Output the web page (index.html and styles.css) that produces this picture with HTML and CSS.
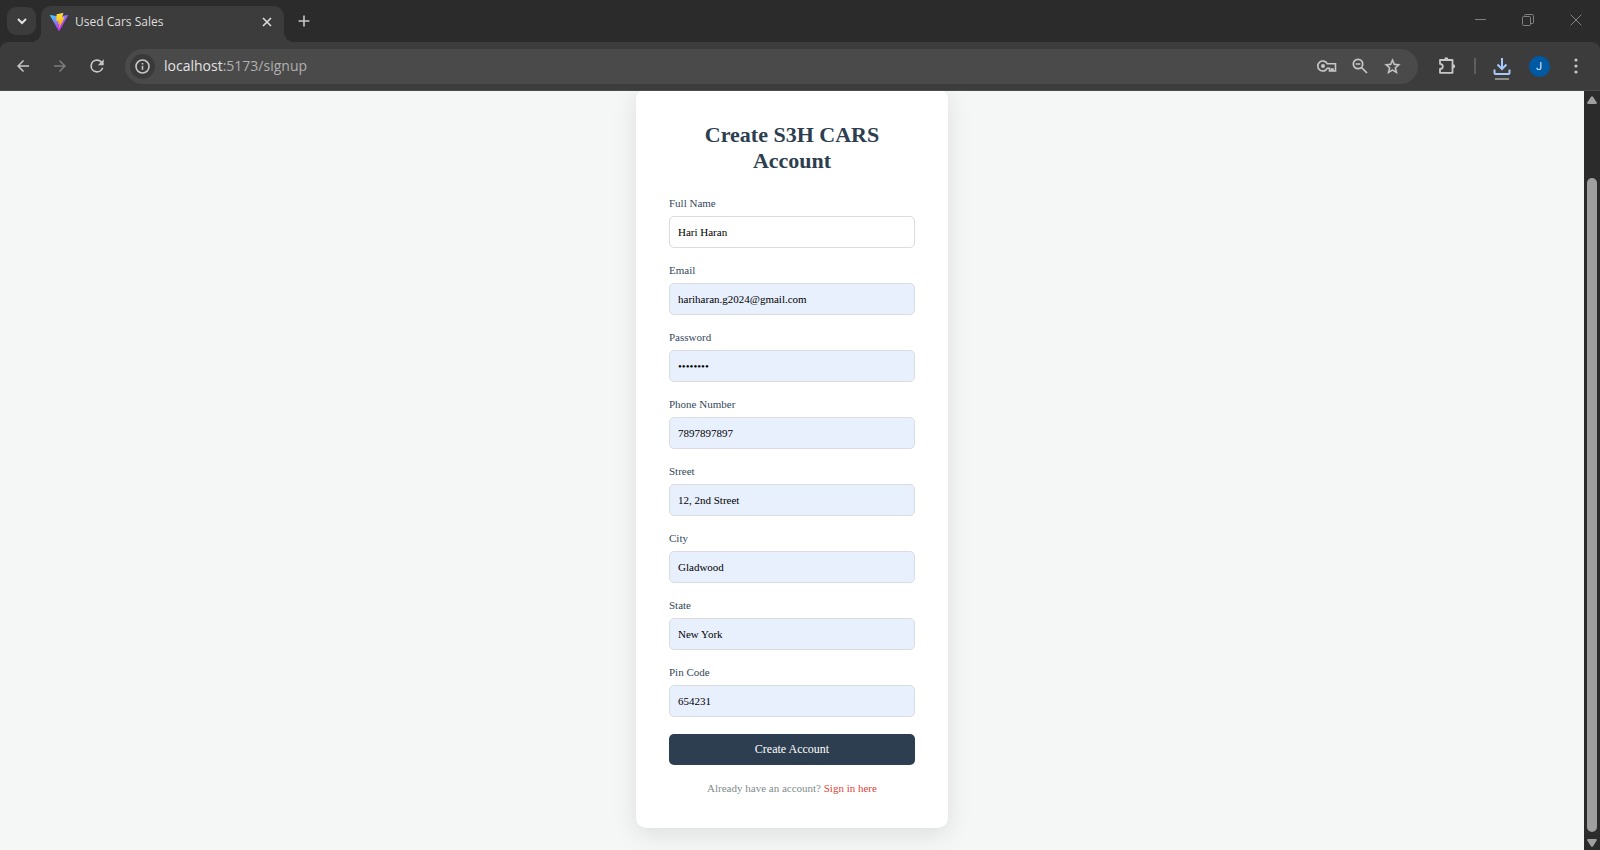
FILE: index.html
```
<!DOCTYPE html>
<html lang="en">
<head>
<meta charset="utf-8">
<meta name="viewport" content="width=device-width, initial-scale=1">
<title>Used Cars Sales</title>
<link rel="stylesheet" href="styles.css">
</head>
<body class="window">
  <header class="chrome">
    <div class="tabstrip">
      <button class="tab-search" type="button" aria-label="Search tabs">
        <svg width="12" height="12" viewBox="0 0 12 12" fill="none" stroke="currentColor" stroke-width="2"><path d="M2 4l4 4 4-4"/></svg>
      </button>
      <div class="tab">
        <svg class="favicon" width="18" height="18" viewBox="0 0 256 257">
          <defs>
            <linearGradient id="v1" x1="-.8%" x2="57.6%" y1="7.7%" y2="78.4%"><stop offset="0" stop-color="#41d1ff"/><stop offset="1" stop-color="#bd34fe"/></linearGradient>
            <linearGradient id="v2" x1="43.4%" x2="50.3%" y1="2.2%" y2="89%"><stop offset="0" stop-color="#ffea83"/><stop offset=".083" stop-color="#ffdd35"/><stop offset="1" stop-color="#ffa800"/></linearGradient>
          </defs>
          <path fill="url(#v1)" d="M255.153 37.938L134.897 252.976c-2.483 4.44-8.862 4.466-11.382.048L.875 37.958c-2.746-4.814 1.371-10.646 6.827-9.67l120.385 21.517a6.537 6.537 0 0 0 2.322-.004l117.867-21.483c5.438-.991 9.574 4.796 6.877 9.62Z"/>
          <path fill="url(#v2)" d="M185.432.063L96.44 17.501a3.268 3.268 0 0 0-2.634 3.014l-5.474 92.456a3.268 3.268 0 0 0 3.997 3.378l24.777-5.718c2.318-.535 4.413 1.507 3.936 3.838l-7.361 36.047c-.495 2.426 1.782 4.5 4.151 3.78l15.304-4.649c2.372-.72 4.652 1.36 4.15 3.788l-11.698 56.621c-.732 3.542 3.979 5.473 5.943 2.437l1.313-2.028l72.516-144.72c1.215-2.423-.88-5.186-3.54-4.672l-25.505 4.922c-2.396.462-4.435-1.77-3.759-4.114l16.646-57.705c.677-2.35-1.37-4.583-3.769-4.113Z"/>
        </svg>
        <span class="tab-title">Used Cars Sales</span>
        <button class="tab-close" type="button" aria-label="Close tab">
          <svg width="10" height="10" viewBox="0 0 10 10" stroke="currentColor" stroke-width="1.600"><path d="M1 1l8 8M9 1l-8 8"/></svg>
        </button>
      </div>
      <button class="new-tab" type="button" aria-label="New tab">
        <svg width="12" height="12" viewBox="0 0 12 12" stroke="currentColor" stroke-width="1.600"><path d="M6 .5v11M.5 6h11"/></svg>
      </button>
      <div class="window-controls">
        <button type="button" aria-label="Minimize"><svg width="12" height="12" viewBox="0 0 12 12" stroke="currentColor"><path d="M1 5.500h11"/></svg></button>
        <button type="button" aria-label="Restore"><svg width="12" height="12" viewBox="0 0 12 12" fill="none" stroke="currentColor"><rect x=".5" y="2.500" width="8" height="9" rx="1"/><path d="M2.500 2.500v-1q0-1 1-1h7q1 0 1 1v7q0 1-1 1h-2"/></svg></button>
        <button type="button" aria-label="Close"><svg width="12" height="12" viewBox="0 0 12 12" stroke="currentColor"><path d="M.5.5l11 11M11.500.5l-11 11"/></svg></button>
      </div>
    </div>
    <nav class="toolbar" aria-label="Browser toolbar">
      <button class="tool" type="button" aria-label="Back"><svg width="18" height="18" viewBox="0 0 24 24" fill="currentColor"><path d="M20 11H7.830l5.590-5.590L12 4l-8 8 8 8 1.410-1.410L7.830 13H20v-2z"/></svg></button>
      <button class="tool dim" type="button" aria-label="Forward"><svg width="18" height="18" viewBox="0 0 24 24" fill="currentColor"><path d="M4 11h12.170l-5.590-5.590L12 4l8 8-8 8-1.410-1.410L16.170 13H4v-2z"/></svg></button>
      <button class="tool" type="button" aria-label="Reload"><svg width="20" height="20" viewBox="0 0 24 24" fill="currentColor"><path d="M17.650 6.350A7.958 7.958 0 0 0 12 4a8 8 0 1 0 7.730 10h-2.080A6 6 0 1 1 12 6c1.660 0 3.140.69 4.220 1.780L13 11h7V4l-2.350 2.350z"/></svg></button>
      <div class="omnibox">
        <button class="site-info" type="button" aria-label="View site information">
          <svg width="15" height="15" viewBox="0 0 15 15" fill="none" stroke="currentColor" stroke-width="1.600"><circle cx="7.500" cy="7.500" r="6.500"/><path d="M7.500 6.800v4M7.500 4v1.600"/></svg>
        </button>
        <div class="url"><span class="host">localhost</span>:5173/signup</div>
        <button class="action" type="button" aria-label="Manage passwords"><svg width="20" height="14" viewBox="0 0 20 14" fill="none" stroke="currentColor" stroke-width="1.600"><path d="M10.300 4.800A5 5 0 1 0 10.300 9.200H12.500V12H14.500V10H16V12H18.500V4.800Z"/><circle cx="6" cy="7" r="2" fill="currentColor" stroke="none"/></svg></button>
        <button class="action" type="button" aria-label="Zoom"><svg width="16" height="16" viewBox="0 0 16 16" fill="none" stroke="currentColor" stroke-width="1.700"><circle cx="6" cy="6" r="4.700"/><path d="M9.500 9.500L15 15M3.700 6h4.600"/></svg></button>
        <button class="action" type="button" aria-label="Bookmark this tab"><svg width="19" height="19" viewBox="0 0 24 24" fill="currentColor" stroke="currentColor" stroke-width=".4"><path d="M22 9.240l-7.190-.62L12 2 9.190 8.630 2 9.240l5.460 4.730L5.820 21 12 17.270 18.180 21l-1.630-7.030L22 9.240zM12 15.400l-3.760 2.270 1-4.280-3.320-2.880 4.380-.38L12 6.100l1.710 4.040 4.380.38-3.320 2.880 1 4.280L12 15.400z"/></svg></button>
      </div>
      <button class="tool" type="button" aria-label="Extensions"><svg width="20" height="20" viewBox="0 0 20 20" fill="none" stroke="currentColor" stroke-width="1.800" stroke-linejoin="round"><path d="M3 4H15.500V16.800H3V13Q5.800 12.800 5.800 10.400T3 7.800Z"/><path d="M7.200 3.600a2.100 2.300 0 0 1 4.200 0zM16 8.200a2.200 2.100 0 0 1 0 4.200z" fill="currentColor" stroke="none"/></svg></button>
      <span class="divider"></span>
      <button class="tool download" type="button" aria-label="Downloads"><svg width="18" height="24" viewBox="0 0 18 24" fill="none" stroke="currentColor" stroke-width="2"><path d="M9 1v10M4.500 7.500L9 12l4.500-4.500M1.500 12.500v3.500q0 1 1 1h13q1 0 1-1v-3.500"/><path d="M2 22h14" stroke="#8c8c8c"/></svg></button>
      <button class="tool" type="button" aria-label="Profile"><span class="avatar">J</span></button>
      <button class="tool" type="button" aria-label="Menu"><svg width="4" height="16" viewBox="0 0 4 16" fill="currentColor"><circle cx="2" cy="2" r="1.600"/><circle cx="2" cy="8" r="1.600"/><circle cx="2" cy="14" r="1.600"/></svg></button>
    </nav>
  </header>
  <div class="viewport">
    <main class="page">
      <form class="card">
        <h1 class="title">Create S3H CARS Account</h1>
        <div class="field"><label for="name">Full Name</label><input id="name" type="text" value="Hari Haran"></div>
        <div class="field filled"><label for="email">Email</label><input id="email" type="email" value="hariharan.g2024@gmail.com"></div>
        <div class="field filled"><label for="password">Password</label><input id="password" type="password" value="password"></div>
        <div class="field filled"><label for="phone">Phone Number</label><input id="phone" type="tel" value="7897897897"></div>
        <div class="field filled"><label for="street">Street</label><input id="street" type="text" value="12, 2nd Street"></div>
        <div class="field filled"><label for="city">City</label><input id="city" type="text" value="Gladwood"></div>
        <div class="field filled"><label for="state">State</label><input id="state" type="text" value="New York"></div>
        <div class="field filled"><label for="pin">Pin Code</label><input id="pin" type="text" value="654231"></div>
        <button class="submit" type="submit">Create Account</button>
        <p class="signin">Already have an account? <a href="#signin">Sign in here</a></p>
      </form>
    </main>
    <div class="scrollbar" aria-hidden="true">
      <svg width="10" height="8" viewBox="0 0 10 8" fill="#9f9f9f"><path d="M4 .8Q5-.4 6 .8L9.700 6.500Q10.200 8 8.800 8H1.200Q-.2 8 .3 6.500Z"/></svg>
      <div class="thumb"></div>
      <svg width="10" height="8" viewBox="0 0 10 8" fill="#9f9f9f"><path d="M4 7.200Q5 8.400 6 7.200L9.700 1.500Q10.200 0 8.800 0H1.200Q-.2 0 .3 1.500Z"/></svg>
    </div>
  </div>
</body>
</html>
```

FILE: styles.css
```
* {
  box-sizing: border-box;
}

.window {
  display: flex;
  flex-direction: column;
  height: 100vh;
  margin: 0;
  overflow: hidden;
  background: #2b2b2b;
  font-family: "Open Sans", "Noto Sans", sans-serif;
}

button {
  display: flex;
  align-items: center;
  justify-content: center;
  flex: none;
  padding: 0;
  border: 0;
  background: none;
  color: inherit;
  font: inherit;
}

.chrome {
  flex: none;
  color: #c7c7c7;
}

/* Tab strip */
.tabstrip {
  display: flex;
  height: 42px;
  padding-left: 7px;
}

.tab-search {
  width: 29px;
  height: 28px;
  margin: 7px 5px 0 0;
  border-radius: 9px;
  background: #3c3c3c;
  color: #e3e3e3;
}

.tab {
  position: relative;
  display: flex;
  align-items: center;
  width: 243px;
  margin-top: 6px;
  padding: 0 11px 5px 9px;
  border-radius: 10px 10px 0 0;
  background: #3c3c3c;
  color: #dedede;
}

.tab::before,
.tab::after {
  content: "";
  position: absolute;
  bottom: 0;
  width: 10px;
  height: 10px;
}

.tab::before {
  right: 100%;
  background: radial-gradient(circle at 0 0, transparent 10px, #3c3c3c 10px);
}

.tab::after {
  left: 100%;
  background: radial-gradient(circle at 100% 0, transparent 10px, #3c3c3c 10px);
}

.favicon {
  flex: none;
  margin-right: 7px;
}

.tab-title {
  flex: 1;
  font-size: 12px;
  line-height: 16px;
  white-space: nowrap;
}

.tab-close {
  width: 12px;
  height: 20px;
}

.new-tab {
  width: 40px;
  height: 42px;
}

.window-controls {
  display: flex;
  margin-left: auto;
  color: #808080;
}

.window-controls button {
  width: 48px;
  height: 40px;
}

/* Toolbar */
.toolbar {
  display: flex;
  align-items: center;
  gap: 5px;
  height: 49px;
  padding: 0 8px 0 7px;
  border-bottom: 1px solid #4c4c4c;
  border-radius: 8px 8px 0 0;
  background: #3c3c3c;
}

.tool {
  width: 32px;
  height: 32px;
}

.dim {
  color: #7d7d7d;
}

.omnibox {
  display: flex;
  align-items: center;
  flex: 1;
  height: 35px;
  margin: 0 8px 0 7px;
  padding: 0 9px 0 5px;
  border-radius: 18px;
  background: #4a4a4a;
}

.site-info {
  width: 25px;
  height: 25px;
  margin-right: 9px;
  border-radius: 50%;
  background: #3a3a3a;
}

.url {
  flex: 1;
  color: #b0b0b0;
  font-size: 14px;
  line-height: 20px;
}

.host {
  color: #e3e3e3;
}

.action {
  width: 33px;
  height: 32px;
}

.divider {
  width: 2px;
  height: 16px;
  margin: 0 5px 0 6px;
  background: #5e5e5e;
}

.download {
  color: #a8c7fa;
}

.download svg {
  margin-top: 5px;
}

.avatar {
  width: 21px;
  height: 21px;
  border-radius: 50%;
  background: #0059a3;
  color: #dfe9f5;
  font-family: Roboto, sans-serif;
  font-size: 11px;
  line-height: 21px;
}

/* Page */
.viewport {
  display: flex;
  flex: 1;
  min-height: 0;
}

.page {
  flex: 1;
  overflow: hidden;
  background: #f4f7f6;
  font-family: "Liberation Serif", "Times New Roman", serif;
}

.card {
  width: 312px;
  margin: -2px auto 0;
  padding: 33px 33px 33px;
  border-radius: 10px;
  background: #fff;
  box-shadow: 0 6px 24px rgba(0, 0, 0, 0.1);
  font-size: 11px;
  line-height: 13px;
}

.title {
  margin: 0 0 23px;
  color: #2c3e50;
  font-size: 22px;
  line-height: 26px;
  text-align: center;
}

.field {
  display: flex;
  flex-direction: column;
  gap: 6px;
  margin-bottom: 16px;
  color: #34495e;
}

.field input {
  width: 100%;
  height: 32px;
  padding: 0 8px 1px;
  border: 1px solid #d9dde1;
  border-radius: 5px;
  outline: 0;
  background: #fff;
  color: #000;
  font: inherit;
}

.filled input {
  background: #e8f0fe;
}

.submit {
  width: 100%;
  height: 31px;
  margin-top: 17px;
  border-radius: 5px;
  background: #2c3e50;
  color: #fff;
  font-size: 12px;
}

.signin {
  margin: 17px 0 0;
  color: #7f8c8d;
  text-align: center;
}

.signin a {
  color: #e0443a;
  text-decoration: none;
}

/* Scrollbar */
.scrollbar {
  display: flex;
  flex-direction: column;
  align-items: center;
  flex: none;
  width: 16px;
  padding: 5px 0 3px;
  background: #2b2b2b;
}

.thumb {
  flex: 1;
  width: 10px;
  margin: 74px 0 7px;
  border-radius: 5px;
  background: #9f9f9f;
}
```
